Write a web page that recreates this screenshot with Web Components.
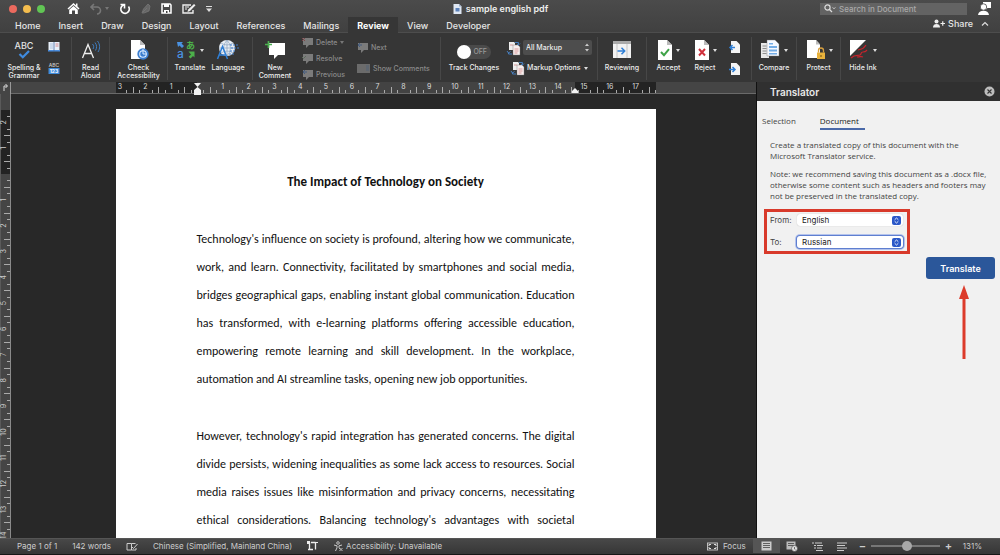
<!DOCTYPE html>
<html lang="en">
<head>
<meta charset="utf-8">
<title>sample english pdf</title>
<style>
html,body{margin:0;height:100%;background:#1c1c1c;font-family:Inter,"Liberation Sans",sans-serif;color:#e6e6e6}
</style>
</head>
<body>
<word-app></word-app>
<script>
const define = (name, html, setup) => {
  const t = document.createElement('template');
  t.innerHTML = '<style>*{box-sizing:border-box}button{font:inherit;color:inherit;background:none;border:0;padding:0;margin:0}select,input{font:inherit;color:inherit;margin:0}</style>' + html;
  customElements.define(name, class extends HTMLElement {
    constructor() {
      super();
      this.attachShadow({ mode: 'open' }).append(t.content.cloneNode(true));
    }
    connectedCallback() { if (setup) setup(this, this.shadowRoot); }
  });
};

const sheet = 'M1 0h9l5 5v15H1z';
const bubble = 'M0 1h10v7H6l-3 3V8H0z';
const ICONS = {
  home: [13, 13, '<path d="M6.500 1L0.500 6.500l1 1L6.500 3l5 4.500 1-1L10.500 4.500V1.500H9V3.200z" fill="#fff"/><path d="M2.200 7.700L6.500 3.900l4.300 3.800V12H8V8.500H5V12H2.200z" fill="#fff"/>'],
  undo: [13, 12, '<path d="M4 1L1 4l3 3M1 4h6a3.500 3.500 0 0 1 0 7" fill="none" stroke="#777" stroke-width="1.600"/>'],
  caretdim: [4, 3, '<path d="M0 0h4L2 3z" fill="#777"/>'],
  caret: [4, 3, '<path d="M0 0h4L2 3z" fill="#ddd"/>'],
  redo: [12, 12, '<path d="M1.500 1.500h4v4M5.500 1.800A4.300 4.300 0 1 0 9.500 3.500" fill="none" stroke="#fff" stroke-width="1.600"/>'],
  pen: [10, 11, '<path d="M1 10L2.500 6 7 1l2 2-1 5-5 2zM2 9l4-4" fill="#666" stroke="#777" stroke-width=".8"/>'],
  save: [11, 11, '<path d="M1 1h8l1 1v8H1z" fill="none" stroke="#fff" stroke-width="1.500"/><path d="M3 1h5v3H3zM3 7h5v3H3z" fill="#fff"/><path d="M5 8h1.500v2H5z" fill="#444"/>'],
  edit: [14, 12, '<path d="M9 2H1v8h10V7" fill="none" stroke="#eee" stroke-width="1.400"/><path d="M3 4h4M3 6h2" stroke="#eee"/><path d="M5.500 9l.7-2.500L12 1l1.500 1.200L8 8z" fill="#eee"/>'],
  more: [6, 6, '<path d="M0 .5h6" stroke="#ddd"/><path d="M0 2.500h6L3 6z" fill="#ddd"/>'],
  doc: [9, 10, '<path d="M.5 0h5.500L8.500 2.500V10H.5z" fill="#dfe7f3"/><path d="M6 0v2.500h2.500z" fill="#9bb0cc"/><path d="M2.500 4h4v3.500h-4z" fill="#5b81b9"/>'],
  search: [12, 9, '<circle cx="3.500" cy="3.500" r="2.600" fill="none" stroke="#ddd" stroke-width="1.200"/><path d="M5.500 5.500L8 8" stroke="#ddd" stroke-width="1.300"/><path d="M8.500 3.500l1.500 1.200 1.500-1.200" fill="none" stroke="#ccc" stroke-width=".9"/>'],
  account: [14, 13, '<path d="M5 0h8v6H9.500l-2 2V6H5z" fill="#fff"/><circle cx="5.500" cy="5" r="3.200" fill="#fff" stroke="#494949" stroke-width=".8"/><path d="M0 13c.5-3 2.500-4.200 5.500-4.200S10.500 10 11 13z" fill="#fff"/>'],
  share: [12, 9, '<circle cx="3.500" cy="2.600" r="2" fill="#eee"/><path d="M0 8.500C0 6 1.500 5 3.500 5S7 6 7 8.500z" fill="#eee"/><path d="M7.500 4.500h4.500M9.750 2.200v4.600" stroke="#eee" stroke-width="1.200"/>'],
  up: [8, 5, '<path d="M1 4.500l3-3 3 3" fill="none" stroke="#ddd" stroke-width="1.200"/>'],
  spell: [20, 20, '<text x="10" y="9" font-size="9" text-anchor="middle" fill="#e4e4e4" font-family="Inter">ABC</text><path d="M5.500 14l3.300 3.300L15 11" fill="none" stroke="#3f8be0" stroke-width="2.200"/>'],
  book: [12, 11, '<path d="M.5 1h11v9H.5z" fill="#e8f0fa"/><path d="M0 9h12v1.500H0z" fill="#4b8fe0"/><path d="M6 1v9" stroke="#4b6da5" stroke-width=".8"/><path d="M2 3h3M2 5h3M2 7h3" stroke="#9ab2d2" stroke-width=".7"/><path d="M7.500 3h3M7.500 5h3" stroke="#d06060" stroke-width=".7"/>'],
  count: [12, 12, '<text x="6" y="5" font-size="5" text-anchor="middle" fill="#ccc" font-family="Inter">ABC</text><path d="M.5 6h11v6H.5z" fill="#3f8bdc"/><text x="6" y="11" font-size="5" font-weight="700" text-anchor="middle" fill="#fff" font-family="Inter">123</text>'],
  aloud: [20, 20, '<path d="M1.500 18L7 4.500 12.500 18M3.500 13.500h7" fill="none" stroke="#eee" stroke-width="1.300"/><path d="M11.500 4c1.500 1.500 1.500 3.500.5 5M14 2.500c2 2.500 2 5.500.5 8M16.500 1c2.700 3.500 2.700 7.500.5 11" fill="none" stroke="#3f7fc4" stroke-width="1"/>'],
  check: [20, 20, '<path d="M2 0h9l5 5v14H2z" fill="#fff"/><path d="M11 0v5h5z" fill="#bbb"/><circle cx="14" cy="14" r="5.700" fill="#3b7ed0"/><circle cx="14" cy="14" r="3.300" fill="none" stroke="#dcecff" stroke-width="1.100"/><path d="M14 9v5h3.500" fill="none" stroke="#dcecff" stroke-width="1"/>'],
  translate: [20, 20, '<text x="1" y="18" font-size="12" fill="#4a92e2" font-family="Inter">a</text><text x="10" y="9" font-size="9" font-weight="700" fill="#4cb04a" font-family="Noto Sans CJK JP">あ</text><path d="M1 2h6L5.500 3.500 8 6 6 8 3.500 5.500 2 7z" fill="#4a92e2"/><path d="M18.500 11.500v6L17 16l-2.500 2.500-1.800-1.800L15 14.500 12.500 11.500z" fill="#4cb04a"/>'],
  language: [22, 20, '<circle cx="10" cy="8" r="8" fill="#e8eef5"/><path d="M2 8h16M10 0v16M4 3q6 4 12 0M4 13q6-4 12 0M10 0q-7 8 0 16M10 0q7 8 0 16" fill="none" stroke="#8ba2bd" stroke-width=".7"/><path d="M.5 19L5.500 6.500 10.500 19M2.500 15h6" fill="none" stroke="#2f7fd6" stroke-width="1.500"/><path d="M13 5h8M14 8h8M13 11h6M12 14h5" stroke="#3f7fd0" stroke-width="1" stroke-dasharray="2 1"/>'],
  comment: [20, 20, '<path d="M4 3h16v12h-7l-4 4v-4H4z" fill="#fff"/><path d="M0 4.500h7M3.500 1v7" stroke="#4caf50" stroke-width="1.700"/>'],
  cdel: [11, 11, '<g transform="translate(1 0)"><path d="' + bubble + '" fill="#7b7b7b"/></g><path d="M0 1l3 3M3 1L0 4" stroke="#80464a"/>'],
  cres: [11, 11, '<g transform="translate(1 0)"><path d="' + bubble + '" fill="#7b7b7b"/></g><path d="M0 4l1.500 1.500L4 3" stroke="#5b6a5b" fill="none"/>'],
  cprev: [11, 11, '<g transform="translate(1 0)"><path d="' + bubble + '" fill="#7b7b7b"/></g><path d="M5 3H1M3 1L1 3l2 2" stroke="#445d80" fill="none"/>'],
  cshow: [13, 11, '<path d="M0 1h13v9H0z" fill="#6b6b6b"/><path d="M9 3h3M9 5h3M9 7h3" stroke="#4d6079" stroke-width=".8"/>'],
  markup: [13, 14, '<path d="M2 1h5l1 1v7H2z" fill="#eee"/><path d="M6 4h5l2 2v8H6z" fill="#f7eeee" stroke="#777" stroke-width=".4"/><path d="M7.500 8h4M7.500 10h4M3 4h3M7.500 12h3" stroke="#c77" stroke-width=".7"/><path d="M8 1.500h3.500V3.500M10 3l1.500 1L13 2.500M0 10l1.500 2 2-1.500M1.500 11.500V13H5" fill="none" stroke="#4a86cc" stroke-width=".9"/>'],
  review: [20, 20, '<path d="M1 1h18v17H1z" fill="#f2f2f2"/><path d="M1 1h18v3H1z" fill="#aaa"/><path d="M5 4v14M15 4v14" stroke="#bbb" stroke-width=".8"/><path d="M5.500 11h7M9.500 7.800l3.200 3.200-3.200 3.200" fill="none" stroke="#2f7fd6" stroke-width="1.500"/>'],
  accept: [15, 20, '<path d="' + sheet + '" fill="#fff"/><path d="M10 0v5h5z" fill="#bbb"/><path d="M4 12l3 3.200 5-6" fill="none" stroke="#3fa348" stroke-width="2"/>'],
  reject: [15, 20, '<path d="' + sheet + '" fill="#fff"/><path d="M10 0v5h5z" fill="#bbb"/><path d="M5 9l6 6.500M11 9l-6 6.500" fill="none" stroke="#d0303c" stroke-width="2"/>'],
  prev: [11, 12, '<path d="M2 0h5.500L11 3.500V12H2z" fill="#f4f4f4"/><path d="M6 6.500H1M3.500 4L1 6.500 3.500 9" fill="none" stroke="#2f7fd6" stroke-width="1.500"/>'],
  next: [11, 12, '<path d="M2 0h5.500L11 3.500V12H2z" fill="#f4f4f4"/><path d="M0 6.500h5.500M3.500 4L6 6.500 3.500 9" fill="none" stroke="#2f7fd6" stroke-width="1.500"/>'],
  compare: [20, 20, '<path d="M1 3h8v15H1z" fill="#e8e8e8"/><path d="M2.500 6h4M2.500 8.500h4M2.500 11h4M2.500 13.500h4" stroke="#777" stroke-width=".8"/><path d="M7 0h8l4 4v12H7z" fill="#f6f9ff" stroke="#777" stroke-width=".4"/><path d="M9 6h8v2H9zM9 9.500h8v2H9zM9 13h8v1.500H9zM9 3h4v1.500H9z" fill="#74ade6"/>'],
  protect: [20, 20, '<path d="M2 0h9l4 4.500V18H2z" fill="#fff"/><path d="M11 0v4.500h4z" fill="#bbb"/><path d="M12 12.500h8V19h-8z" fill="#e8b23c"/><path d="M13.500 12.500v-2a2.500 2.500 0 0 1 5 0v2" fill="none" stroke="#d8a040" stroke-width="1.300"/><path d="M16 15v2" stroke="#705010"/>'],
  ink: [20, 20, '<path d="M1 0h16L1 16z" fill="#fff"/><path d="M2 18c4-4 7-2 9-3s0-3 3-3 3-1 4-2M8 17c4 0 4-1 6 0M9 10c2-1 5 0 8-5" fill="none" stroke="#c8232c" stroke-width="1.200"/>'],
  close: [11, 11, '<circle cx="5.500" cy="5.500" r="5" fill="#bdbdbd"/><path d="M3.500 3.500l4 4M7.500 3.500l-4 4" stroke="#333" stroke-width="1.100"/>'],
  updown: [9, 9, '<rect width="9" height="9" rx="2" fill="#2b58c8"/><path d="M2.700 3.700L4.500 2l1.800 1.700M2.700 5.300L4.500 7l1.800-1.700" fill="none" stroke="#fff" stroke-width=".9"/>'],
  stepper: [4, 9, '<path d="M0 3l2-2.500L4 3zM0 6l2 2.500L4 6z" fill="#ccc"/>'],
  arrow: [10, 74, '<path d="M5 11v63" stroke="#dc3b2b" stroke-width="3"/><path d="M5 0L0 14h10z" fill="#dc3b2b"/>'],
  proof: [12, 9, '<path d="M5.500 1.500H1v6.500h4.500zM5.500 1.500h4M5.500 8H10V6M6 5l1.500 1.500L11.500 2" fill="none" stroke="#ccc"/>'],
  record: [11, 10, '<path d="M2.500 1v7M1 8.500h5M4 1.500h4.500M8.500 1v7.500" stroke="#eee" stroke-width="1.300" fill="none"/><path d="M0 0h3v3H0z" fill="#eee"/><path d="M8 1.500h3" stroke="#eee"/>'],
  access: [11, 11, '<circle cx="5" cy="2" r="1.300" fill="none" stroke="#ccc" stroke-width=".9"/><path d="M1 4l3 .8v2L2.500 10M9 4l-3 .8v1.500L7 8" fill="none" stroke="#ccc"/><path d="M6.500 7l3 3M9.500 7l-3 3" stroke="#ccc" stroke-width=".9"/>'],
  focus: [11, 9, '<rect x=".5" y="1" width="10" height="7" fill="none" stroke="#ccc" stroke-width=".9"/><path d="M2 4V2.500h2M7 2.500h2V4M9 5v1.500H7M4 6.500H2V5" fill="none" stroke="#ddd"/>'],
  print: [11, 10, '<path d="M.5.500h10v9H.5z" fill="#ccc"/><path d="M2 2.500h7M2 4.500h7M2 6.500h7" stroke="#444" stroke-width=".8"/>'],
  web: [12, 11, '<path d="M.5.500h9v8h-9z" fill="#bbb"/><path d="M2 2.500h6M2 4.500h6" stroke="#444" stroke-width=".8"/><circle cx="8.500" cy="7.500" r="3" fill="#ddd" stroke="#444" stroke-width=".6"/><path d="M8.500 6v2l1 .8" stroke="#444" stroke-width=".7" fill="none"/>'],
  outline: [11, 9, '<path d="M0 1h2M3 1h7M2 3.500h2M5 3.500h6M2 6h2M5 6h5M4 8.500h7" stroke="#ccc" stroke-width="1.100"/>'],
  draft: [11, 9, '<path d="M0 1h10M0 3.500h8M0 6h10M0 8.500h7" stroke="#ccc" stroke-width="1.200"/>'],
  corner: [11, 12, '<path d="M4 9V4h3M5.500 2L7.500 4 5.500 6" fill="none" stroke="#ddd"/><path d="M10.500 0v12" stroke="#999"/>']
};
customElements.define('ui-icon', class extends HTMLElement {
  connectedCallback() {
    if (this.shadowRoot) return;
    const [w, h, body] = ICONS[this.getAttribute('name')];
    this.attachShadow({ mode: 'open' }).innerHTML =
      '<style>:host{display:block;flex:none}svg{display:block;overflow:visible}</style>' +
      `<svg width="${w}" height="${h}" viewBox="0 0 ${w} ${h}" aria-hidden="true">${body}</svg>`;
  }
});

define('title-bar', `<style>
:host{display:grid;grid-template-columns:1fr auto 1fr;align-items:center;height:17px;padding:0 8px 0 9px}
.left,.title,.right{display:flex;align-items:center}
.lights{display:flex;gap:6px;margin-right:22px}
.lights button{width:8px;height:8px;border-radius:50%;background:#ec6a5e}
.lights button:nth-child(2){background:#f4bd4e}
.lights button:nth-child(3){background:#61c554}
.tools{display:flex;align-items:center;gap:10px}
.undo{display:flex;align-items:center;gap:2px}
.title{gap:4px;font-size:9px;font-weight:600;color:#eee}
h1{font:inherit;margin:0}
.right{justify-content:flex-end;gap:11px}
label{display:flex;align-items:center;gap:3px;width:147px;height:12px;padding:0 4px;background:#636363;font-size:8px;font-weight:500}
input{flex:1;min-width:0;border:0;padding:0;background:none;outline:0}
input::placeholder{color:#a9a9a9;opacity:1}
</style>
<div class="left"><div class="lights"><button aria-label="Close"></button><button aria-label="Minimise"></button><button aria-label="Zoom"></button></div>
<div class="tools"><button aria-label="Home"><ui-icon name="home"></ui-icon></button><button class="undo" aria-label="Undo"><ui-icon name="undo"></ui-icon><ui-icon name="caretdim"></ui-icon></button><button aria-label="Repeat"><ui-icon name="redo"></ui-icon></button><button aria-label="Pen"><ui-icon name="pen"></ui-icon></button><button aria-label="Save"><ui-icon name="save"></ui-icon></button><button aria-label="Edit"><ui-icon name="edit"></ui-icon></button><button aria-label="More"><ui-icon name="more"></ui-icon></button></div></div>
<div class="title"><ui-icon name="doc"></ui-icon><h1>sample english pdf</h1></div>
<div class="right"><label><ui-icon name="search"></ui-icon><input type="search" placeholder="Search in Document" aria-label="Search in Document"></label><button aria-label="Account"><ui-icon name="account"></ui-icon></button></div>`);

define('ribbon-tabs', `<style>
:host{display:flex;height:16px;padding:0 11px 0 6px;font-size:9px;font-weight:500;border-bottom:1px solid #4d4d4d}
nav{display:flex;flex:1}
button{height:16px;padding:0 9px}
.on{background:#363636;font-weight:700;color:#fff}
.share{display:flex;align-items:center;gap:3px;padding:0 8px 4px 0}
.up{padding:0 0 4px}
</style>
<nav><button>Home</button><button>Insert</button><button>Draw</button><button>Design</button><button>Layout</button><button>References</button><button>Mailings</button><button class="on">Review</button><button>View</button><button>Developer</button></nav>
<button class="share"><ui-icon name="share"></ui-icon>Share</button><button class="up" aria-label="Collapse ribbon"><ui-icon name="up"></ui-icon></button>`);

define('ribbon-button', `<style>
:host{display:block;flex:none;padding-top:3px}
button{display:flex;flex-direction:column;align-items:center;gap:4px;width:100%;line-height:8px;text-align:center}
.pic{display:flex;align-items:center;gap:4px;height:20px}
</style><button><span class="pic"></span><span><slot></slot></span></button>`, (el, root) => {
  const pic = root.querySelector('.pic');
  if (pic.firstChild) return;
  pic.innerHTML = `<ui-icon name="${el.getAttribute('icon')}"></ui-icon>` + (el.hasAttribute('menu') ? '<ui-icon name="caret"></ui-icon>' : '');
});

define('ribbon-group', `<style>
:host{display:flex;align-items:flex-start;flex:none;height:43px;border-right:1px solid #474747}
:host(:last-of-type){border:0}
</style><slot></slot>`);

define('ribbon-bar', `<style>
:host{display:flex;height:49px;padding-top:4px;background:#363636;font-size:7px;font-weight:500;color:#ececec}
.col{display:flex;flex-direction:column}
.pair{gap:10px;padding-top:4px}
.pair.after{padding-left:9px}
.three{gap:5px;padding-left:5px;width:60px}
.two{gap:10px;padding-top:5px}
.row{display:flex;align-items:center;gap:3px;line-height:10px;white-space:nowrap}
.dim{color:#8a8a8a}
.track{width:66px;align-items:center;gap:4px;padding-top:8px}
.switch{position:relative;width:34px;height:14px}
.switch input{appearance:none;display:block;width:34px;height:14px;border-radius:7px;background:#4a4a4a}
.switch input::before{content:"";display:block;width:14px;height:14px;border-radius:50%;background:#fff}
.switch span{position:absolute;right:4px;top:3px;line-height:8px;color:#999;pointer-events:none}
.mk{gap:6px;padding-top:3px}
.mk .options{padding-left:4px}
.sel{position:relative;display:flex;align-items:center;width:69px;height:15px}
select{appearance:none;width:100%;height:15px;border:0;border-radius:2px;padding:0 3px;background:#4d4d4d}
.sel ui-icon{position:absolute;right:3px;pointer-events:none}
</style>
<ribbon-group style="width:72px"><ribbon-button icon="spell" style="width:48px">Spelling &amp;<br>Grammar</ribbon-button><div class="col pair"><button aria-label="Thesaurus"><ui-icon name="book"></ui-icon></button><button aria-label="Word Count"><ui-icon name="count"></ui-icon></button></div></ribbon-group>
<ribbon-group style="width:38px"><ribbon-button icon="aloud" style="width:37px">Read<br>Aloud</ribbon-button></ribbon-group>
<ribbon-group style="width:58px"><ribbon-button icon="check" style="width:57px">Check<br>Accessibility</ribbon-button></ribbon-group>
<ribbon-group style="width:85px"><ribbon-button icon="translate" menu style="width:44px">Translate</ribbon-button><ribbon-button icon="language" style="width:32px">Language</ribbon-button></ribbon-group>
<ribbon-group style="width:188px"><ribbon-button icon="comment" style="width:44px">New<br>Comment</ribbon-button>
<div class="col three dim"><button class="row"><ui-icon name="cdel"></ui-icon>Delete<ui-icon name="caretdim"></ui-icon></button><button class="row"><ui-icon name="cres"></ui-icon>Resolve</button><button class="row"><ui-icon name="cprev"></ui-icon>Previous</button></div>
<div class="col two dim"><button class="row"><ui-icon name="cprev"></ui-icon>Next</button><button class="row"><ui-icon name="cshow"></ui-icon>Show Comments</button></div></ribbon-group>
<ribbon-group style="width:157px"><label class="col track"><span class="switch"><input type="checkbox" role="switch"><span>OFF</span></span>Track Changes</label>
<div class="col mk"><label class="row"><ui-icon name="markup"></ui-icon><span class="sel"><select aria-label="Markup view"><option>All Markup</option></select><ui-icon name="stepper"></ui-icon></span></label><button class="row options"><ui-icon name="markup"></ui-icon>Markup Options<ui-icon name="caret"></ui-icon></button></div></ribbon-group>
<ribbon-group style="width:49px"><ribbon-button icon="review" style="width:48px">Reviewing</ribbon-button></ribbon-group>
<ribbon-group style="width:105px"><ribbon-button icon="accept" menu style="width:43px">Accept</ribbon-button><ribbon-button icon="reject" menu style="width:30px">Reject</ribbon-button><div class="col pair after"><button aria-label="Previous change"><ui-icon name="prev"></ui-icon></button><button aria-label="Next change"><ui-icon name="next"></ui-icon></button></div></ribbon-group>
<ribbon-group style="width:45px"><ribbon-button icon="compare" menu style="width:44px">Compare</ribbon-button></ribbon-group>
<ribbon-group style="width:44px"><ribbon-button icon="protect" menu style="width:43px">Protect</ribbon-button></ribbon-group>
<ribbon-group style="width:45px"><ribbon-button icon="ink" menu style="width:44px">Hide Ink</ribbon-button></ribbon-group>`);

/* One centimetre of the page at 131% zoom, in pixels. */
const CM = 25.8;
const ticks = (from, to, zero, draw) => {
  let out = '';
  for (let q = Math.ceil((from - zero) / CM * 4); zero + q * CM / 4 < to; q++) {
    if (q % 4) out += draw(Math.round(zero + q * CM / 4) + .5, q % 2 ? 3 : 6, '');
    else if (q) out += draw(zero + q * CM / 4, 0, Math.abs(q / 4));
  }
  return out;
};
define('page-ruler', `<style>
:host{display:flex;height:12px;background:#454545;border-bottom:1px solid #6a6a6a;justify-content:center;padding-left:4px}
svg{display:block;flex:none;overflow:visible}
</style><svg width="540" height="13" font-size="7" font-family="Inter"></svg>`, (el, root) => {
  root.querySelector('svg').innerHTML =
    '<rect width="540" height="11" fill="#232323"/><rect x="81" width="378" height="11" fill="#434343"/>' +
    ticks(4, 540, 81, (x, len, n) => len ? `<path d="M${x} 11v-${len}" stroke="#aaa"/>` : `<text x="${x}" y="7" text-anchor="middle" fill="#ddd">${n}</text>`) +
    '<path d="M78 1h7l-3.500 4zM78 13V8l3.500-3L85 8v5zM456 11V9l3-3 3 3v2z" fill="#f2f2f2"/>' +
    '<text x="4" y="7" text-anchor="middle" fill="#ddd">3</text>';
});
define('side-ruler', `<style>
:host{display:block;width:11px;background:#454545;border-right:1px solid #8a8a8a;overflow:hidden}
svg{display:block;width:10px;height:100%}
</style><svg font-size="7" font-family="Inter"></svg>`, (el, root) => {
  const draw = () => {
    const h = el.clientHeight;
    root.querySelector('svg').innerHTML =
      `<rect y="16" width="10" height="64" fill="#232323"/><rect width="1" height="${h}" fill="#5a5a5a"/>` +
      ticks(16, h, 80, (y, len, n) => len ? `<path d="M10 ${y}h-${len}" stroke="#aaa"/>`
        : y + 2 < h ? `<text transform="translate(6 ${y}) rotate(-90)" text-anchor="middle" fill="#ccc">${n}</text>` : '');
  };
  draw();
  new ResizeObserver(draw).observe(el);
});

define('doc-page', `<style>
:host{display:block;width:540px;padding:59px 81px;background:#fff;color:#111;font:500 12px/28px Carlito,Lato,sans-serif}
h2{font-size:13px;font-weight:700;text-align:center;margin:0 0 29px}
p{margin:0 0 29px}
p span{display:block;white-space:nowrap;text-align-last:justify}
p span.end{text-align-last:start}
</style>
<h2>The Impact of Technology on Society</h2>
<p><span>Technology's influence on society is profound, altering how we communicate, </span><span>work, and learn. Connectivity, facilitated by smartphones and social media, </span><span>bridges geographical gaps, enabling instant global communication. Education </span><span>has transformed, with e-learning platforms offering accessible education, </span><span>empowering remote learning and skill development. In the workplace, </span><span class="end">automation and AI streamline tasks, opening new job opportunities.</span></p>
<p><span>However, technology's rapid integration has generated concerns. The digital </span><span>divide persists, widening inequalities as some lack access to resources. Social </span><span>media raises issues like misinformation and privacy concerns, necessitating </span><span>ethical considerations. Balancing technology's advantages with societal </span></p>`);

define('language-select', `<style>
:host{display:block}
label{display:flex;align-items:center;font-size:8px;color:#444}
.name{width:27px}
.box{position:relative;display:flex;align-items:center}
select{appearance:none;width:106px;height:12px;border:0;border-radius:3px;padding:0 5px;background:#fff;color:#222;box-shadow:0 0 1px #aaa;outline:0}
:host([active]) select{box-shadow:0 0 0 1px #5f7fd0,0 0 0 2px #b4c3ec}
ui-icon{position:absolute;right:2px;pointer-events:none}
</style><label><span class="name"></span><span class="box"><select><option></option></select><ui-icon name="updown"></ui-icon></span></label>`, (el, root) => {
  root.querySelector('.name').textContent = el.getAttribute('label');
  root.querySelector('option').textContent = el.getAttribute('value');
});

define('translator-pane', `<style>
:host{display:flex;flex-direction:column;width:244px;flex:none;background:#f1f1f1;border-left:1px solid #111;color:#444;font-size:8px}
header{display:flex;align-items:center;justify-content:space-between;height:19px;padding:0 5px 0 13px;background:#303030;color:#e8e8e8}
h2{font-size:10px;font-weight:600;margin:0}
nav{display:flex;gap:24px;padding:14px 5px 0;font-family:"Open Sans",sans-serif}
nav button{height:15px;line-height:12px;padding:0 0 3px;border-bottom:2px solid transparent}
nav .on{color:#222;border-color:#4a69a8;padding-right:6px}
.text{padding:9px 13px 1px;font-family:"Open Sans",sans-serif;line-height:11px}
p{margin:0 0 7px;white-space:nowrap}
form{display:flex;flex-direction:column;align-items:flex-start}
.frame{display:flex;flex-direction:column;gap:10px;margin-left:7px;padding:0 4px 1px 3px;border:3px solid #d83a2b;height:45px;justify-content:center}
.go{align-self:flex-end;margin:3px 5px 0 0;width:69px;height:22px;border-radius:3px;background:#2b579a;color:#fff;font-size:9px;font-weight:600}
.arrow{align-self:flex-end;margin:6px 31px 0 0}
</style>
<header><h2>Translator</h2><button aria-label="Close pane"><ui-icon name="close"></ui-icon></button></header>
<nav><button>Selection</button><button class="on">Document</button></nav>
<div class="text"><p>Create a translated copy of this document with the<br>Microsoft Translator service.</p><p>Note: we recommend saving this document as a .docx file,<br>otherwise some content such as headers and footers may<br>not be preserved in the translated copy.</p></div>
<form><div class="frame"><language-select label="From:" value="English"></language-select><language-select label="To:" value="Russian" active></language-select></div>
<button type="button" class="go">Translate</button></form>
<ui-icon class="arrow" name="arrow"></ui-icon>`);

define('status-bar', `<style>
:host{display:flex;align-items:center;height:17px;padding:0 18px 2px 17px;background:linear-gradient(#484848,#363636 15px,#161616 15px);font-size:8px;color:#ccc;white-space:nowrap;border-top:1px solid #555}
div{display:flex;align-items:center;height:14px}
.l{flex:1;gap:15px}
.a,.f{display:flex;align-items:center;gap:2px}
.f{gap:5px;margin-right:7px}
.v{width:27px;height:14px;display:flex;align-items:center;justify-content:center}
.v.on{background:#555}
.views{margin-right:4px}
.views .v+.v{width:25px}
.zoom{gap:5px}
.zoom button{font-size:11px;font-weight:600;line-height:12px;width:7px}
input{appearance:none;width:69px;height:9px;background:linear-gradient(#777,#777) center/100% 2px no-repeat}
input::-webkit-slider-thumb{appearance:none;width:10px;height:10px;border-radius:50%;background:#a8a8a8}
output{margin-left:6px}
</style>
<div class="l"><span>Page 1 of 1</span><span>142 words</span><button aria-label="Proofing"><ui-icon name="proof"></ui-icon></button><button>Chinese (Simplified, Mainland China)</button><button aria-label="Macro"><ui-icon name="record"></ui-icon></button><button class="a"><ui-icon name="access"></ui-icon>Accessibility: Unavailable</button></div>
<button class="f"><ui-icon name="focus"></ui-icon>Focus</button>
<div class="views"><button class="v on" aria-label="Print layout"><ui-icon name="print"></ui-icon></button><button class="v" aria-label="Web layout"><ui-icon name="web"></ui-icon></button><button class="v" aria-label="Outline"><ui-icon name="outline"></ui-icon></button><button class="v" aria-label="Draft"><ui-icon name="draft"></ui-icon></button></div>
<div class="zoom"><button aria-label="Zoom out">−</button><input type="range" aria-label="Zoom" min="0" max="100" value="53"><button aria-label="Zoom in">+</button><output>131%</output></div>`);

define('word-app', `<style>
:host{display:flex;flex-direction:column;height:100vh}
.top{background:linear-gradient(#4b4b4b,#404040)}
main{flex:1;display:flex;min-height:0;background:#282828}
.edit{flex:1;min-width:0;display:grid;grid-template:12px minmax(0,1fr)/11px minmax(0,1fr)}
.edit>ui-icon{background:#454545}
.canvas{display:flex;justify-content:center;align-items:flex-start;padding:15px 0 0 4px;overflow:hidden}
doc-page{flex:none}
</style>
<div class="top"><title-bar></title-bar><ribbon-tabs></ribbon-tabs></div>
<ribbon-bar></ribbon-bar>
<main><div class="edit"><ui-icon name="corner"></ui-icon><page-ruler></page-ruler><side-ruler></side-ruler><div class="canvas"><doc-page></doc-page></div></div>
<translator-pane></translator-pane></main>
<status-bar></status-bar>`);
</script>
</body>
</html>
